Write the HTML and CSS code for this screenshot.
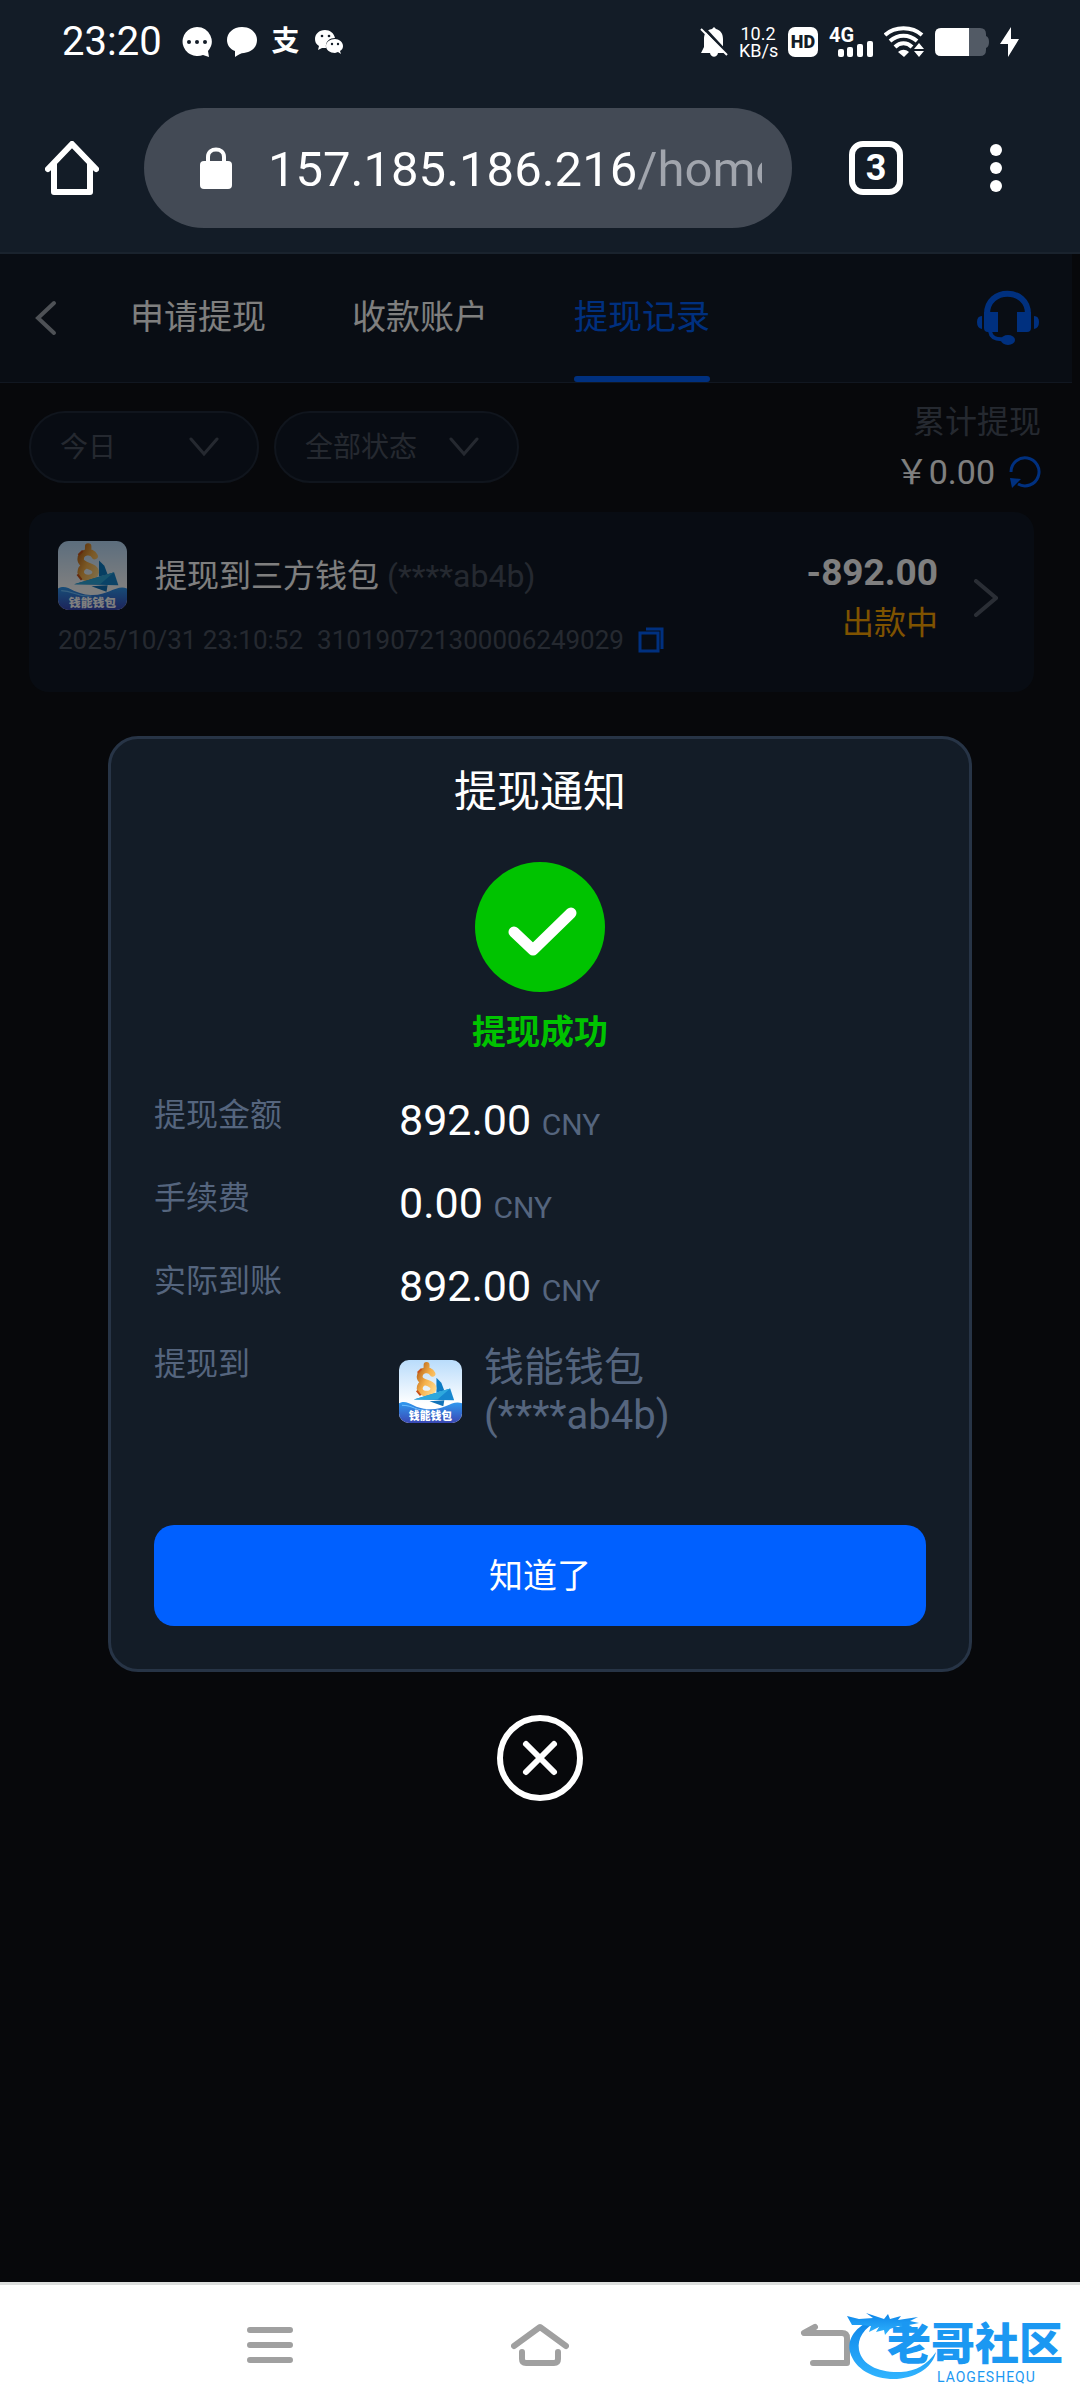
FILE: index.html
```html
<!DOCTYPE html>
<html lang="zh-CN">
<head>
    <meta charset="UTF-8">
    <meta name="viewport" content="width=device-width, initial-scale=1.0">
    <title>提现记录</title>
    <link rel="stylesheet" href="styles.css">
</head>
<body>
    <!-- 钱包图标 -->
    <svg class="defs" width="0" height="0" aria-hidden="true">
        <defs>
            <linearGradient id="sky" x1="0" y1="0" x2="0" y2="1">
                <stop offset="0" stop-color="#b9dcfb"/>
                <stop offset="0.7" stop-color="#ffffff"/>
            </linearGradient>
            <linearGradient id="gold" x1="0" y1="0" x2="1" y2="1">
                <stop offset="0" stop-color="#b8651a"/>
                <stop offset="0.5" stop-color="#f5b04a"/>
                <stop offset="1" stop-color="#ffd98c"/>
            </linearGradient>
            <linearGradient id="sea" x1="0" y1="0" x2="0" y2="1">
                <stop offset="0" stop-color="#2f9af0"/>
                <stop offset="1" stop-color="#3a48b5"/>
            </linearGradient>
            <linearGradient id="dragon" x1="0" y1="0" x2="0" y2="1">
                <stop offset="0" stop-color="#0d84e8"/>
                <stop offset="1" stop-color="#30b4ff"/>
            </linearGradient>
            <clipPath id="round"><rect width="64" height="64" rx="10"/></clipPath>
        </defs>
        <symbol id="wallet" viewBox="0 0 64 64">
            <g clip-path="url(#round)">
                <rect width="64" height="64" fill="url(#sky)"/>
                <path d="M38 18l5 5 3 8-8 2z" fill="#0d7cc4"/>
                <path d="M28 5v5M34 14c-3-6-13-4-13 3 0 7 14 5 14 12-1 7-13 7-14 0 0-3 2-5 4-6" fill="none" stroke="url(#gold)" stroke-width="6" stroke-linecap="round"/>
                <path d="M19 13l4-4M18 31l4 5" stroke="#c9541b" stroke-width="2"/>
                <path d="M15 40l37-11 4 12z" fill="#1787cf"/>
                <path d="M15 40l37-11-13 11z" fill="#2ea8dd"/>
                <path d="M31 42l15-1-1 6z" fill="#1273b9"/>
                <path d="M0 44c9-5 13 5 30 6s24-10 34-6v20H0z" fill="url(#sea)"/>
                <path d="M3 46c12 0 13 6 28 5" fill="none" stroke="#6dc0ff" stroke-width="1"/>
                <text x="32" y="61" text-anchor="middle" class="wallet-text">钱能钱包</text>
            </g>
        </symbol>
    </svg>

    <header class="system">
        <!-- 状态栏 -->
        <div class="status-bar">
            <span class="time">23:20</span>
            <div class="status-left">
                <svg width="30" height="30" viewBox="0 0 30 30"><path d="M15 0a15 14.500 0 1 0 6 28l6 2-1-6A15 14.500 0 0 0 15 0z" fill="#fff"/><g fill="#131c27"><circle cx="7" cy="15" r="2"/><circle cx="15" cy="15" r="2"/><circle cx="23" cy="15" r="2"/></g></svg>
                <svg width="30" height="30" viewBox="0 0 30 30"><path d="M15 0C6 0 0 6 0 13c0 5 3 9 8 11l0 6c3-2 6-4 9-4 8-1 13-6 13-13C30 6 24 0 15 0z" fill="#fff"/></svg>
                <span class="pay">支</span>
                <svg width="28" height="26" viewBox="0 0 28 26"><path d="M10 1C4 1 0 5 0 10c0 3 1 5 4 7l-1 4 4-2 4 0c-1-7 4-10 9-10C19 4 15 1 10 1z" fill="#fff"/><path d="M20 10c-5 0-9 3-9 7s4 7 9 7l3-1 3 2-1-3c2-1 3-3 3-5 0-4-4-7-8-7z" fill="#fff"/><g fill="#131c27"><circle cx="7" cy="7" r="1.300"/><circle cx="14" cy="7" r="1.300"/><circle cx="17" cy="15" r="1.200"/><circle cx="23" cy="15" r="1.200"/></g></svg>
            </div>
            <div class="status-right">
                <svg width="28" height="30" viewBox="0 0 28 30"><path d="M14 0l-2 2C6 3 4 7 4 12v8l-3 6h9c1 5 7 5 8 0h8l-3-6v-8c0-6-3-9-7-10z" fill="#fff"/><path d="M3 0l25 27" stroke="#131c27" stroke-width="3"/><path d="M1 2l26 26" stroke="#fff" stroke-width="2"/></svg>
                <span class="speed">10.2<br>KB/s</span>
                <span class="hd">HD</span>
                <svg class="signal" width="44" height="32" viewBox="0 0 44 32"><text x="0" y="16" class="net">4G</text><g fill="#fff"><rect x="9" y="23" width="6" height="8" rx="2"/><rect x="18" y="21" width="6" height="10" rx="2"/><rect x="28" y="18" width="6" height="13" rx="2"/><rect x="38" y="15" width="6" height="16" rx="2"/></g></svg>
                <svg width="40" height="32" viewBox="0 0 40 32"><g fill="none" stroke="#fff" stroke-width="4"><path d="M1 9c10-9 27-9 37 0"/><path d="M6 15c8-7 19-7 27 0"/><path d="M11 21c5-5 12-5 17 0"/></g><path d="M14 26c4-3 7-3 11 0l-5 5z" fill="#fff"/><path d="M35 17l5 6h-10zM35 31l5-6h-10z" fill="#fff"/></svg>
                <svg width="54" height="28" viewBox="0 0 54 28"><path d="M6 0h39q6 0 6 6v2q3 1 3 6t-3 6v2q0 6-6 6H6q-6 0-6-6V6q0-6 6-6z" fill="#525a65"/><path d="M6 0h28v28H6q-6 0-6-6V6q0-6 6-6z" fill="#fff"/></svg>
                <svg width="20" height="30" viewBox="0 0 20 30"><path d="M11 0L0 17h8v13L19 12h-8z" fill="#fff"/></svg>
            </div>
        </div>

        <!-- 浏览器工具栏 -->
        <div class="toolbar">
            <button class="icon-btn" aria-label="主页">
                <svg width="54" height="54" viewBox="0 0 54 54" fill="none" stroke="#fff" stroke-width="6" stroke-linecap="round" stroke-linejoin="round"><path d="M3 28L27 3l24 25M9 22v29h36V22"/></svg>
            </button>
            <button class="address">
                <svg width="32" height="42" viewBox="0 0 32 42"><rect y="14" width="32" height="28" rx="4" fill="#fff"/><path d="M8 16v-6c0-10 16-10 16 0v6" fill="none" stroke="#fff" stroke-width="4"/></svg>
                <span class="url">157.185.186.216<span class="path">/home</span></span>
            </button>
            <button class="tab-count">3</button>
            <button class="icon-btn more" aria-label="菜单">
                <svg width="36" height="48" viewBox="0 0 36 48" fill="#fff"><circle cx="18" cy="6" r="6"/><circle cx="18" cy="24" r="6"/><circle cx="18" cy="42" r="6"/></svg>
            </button>
        </div>
    </header>

    <main class="content">
        <div class="page">
            <div class="page-head">
                <button class="icon-btn" aria-label="返回">
                    <svg width="22" height="36" viewBox="0 0 22 36" fill="none" stroke="#9da3ac" stroke-width="4" stroke-linecap="round"><path d="M19 3L3 18l16 15"/></svg>
                </button>
                <nav class="tabs">
                    <a href="#apply">申请提现</a>
                    <a href="#account">收款账户</a>
                    <a href="#record" class="active">提现记录</a>
                </nav>
                <button class="icon-btn service" aria-label="客服">
                    <svg width="62" height="56" viewBox="0 0 62 56"><path d="M10 26v-2c0-27 41-27 41 0v2" fill="none" stroke="#0060ff" stroke-width="6"/><g fill="#0060ff"><path d="M7 22h14v20H11q-4 0-4-4zM40 22h14v16q0 4-4 4H40zM5 26v13q-5-1-5-7t5-6zM57 26v13q5-1 5-7t-5-6z"/><ellipse cx="31" cy="50" rx="7" ry="5"/></g><path d="M13 41c1 7 6 9 15 8" fill="none" stroke="#0060ff" stroke-width="4"/></svg>
                </button>
            </div>

            <div class="filters">
                <label class="filter">
                    <select class="day" aria-label="日期"><option>今日</option></select>
                    <svg width="30" height="20" viewBox="0 0 30 20"><path d="M2 2l13 15L28 2"/></svg>
                </label>
                <label class="filter">
                    <select class="state" aria-label="状态"><option>全部状态</option></select>
                    <svg width="30" height="20" viewBox="0 0 30 20"><path d="M2 2l13 15L28 2"/></svg>
                </label>
                <div class="total">
                    <span class="total-label">累计提现</span>
                    <span class="total-value">
                        <span>￥0.00</span>
                        <button class="icon-btn" aria-label="刷新">
                            <svg width="32" height="32" viewBox="0 0 32 32"><path d="M2 16a14 14 0 1 1 7 12" fill="none" stroke="#0060ff" stroke-width="3"/><path d="M1 22l11 1-9 9z" fill="#0060ff"/></svg>
                        </button>
                    </span>
                </div>
            </div>

            <article class="record">
                <div class="record-main">
                    <div class="record-title">
                        <svg class="record-logo" viewBox="0 0 64 64"><use href="#wallet"/></svg>
                        <span>提现到三方钱包 <span class="muted">(****ab4b)</span></span>
                    </div>
                    <div class="record-info">
                        <span>2025/10/31 23:10:52</span>
                        <span>310190721300006249029</span>
                        <button class="icon-btn" aria-label="复制">
                            <svg width="26" height="26" viewBox="0 0 26 26" fill="none" stroke="#0060ff" stroke-width="3"><path d="M2 6h18v18H2zM8 2h16v20"/></svg>
                        </button>
                    </div>
                </div>
                <div class="record-side">
                    <strong>-892.00</strong>
                    <span class="pending">出款中</span>
                </div>
                <svg width="24" height="38" viewBox="0 0 24 38" fill="none" stroke="#555d6b" stroke-width="4" stroke-linecap="round"><path d="M2 2l20 17L2 36"/></svg>
            </article>
        </div>

        <!-- 提现通知弹窗 -->
        <div class="overlay">
            <section class="modal" role="dialog" aria-labelledby="modal-title">
                <h1 id="modal-title">提现通知</h1>
                <svg class="success-icon" width="130" height="130" viewBox="0 0 130 130"><circle cx="65" cy="65" r="65" fill="#00c300"/><path d="M39 70l19 18 38-37" fill="none" stroke="#fff" stroke-width="11" stroke-linecap="round" stroke-linejoin="round"/></svg>
                <p class="success">提现成功</p>
                <dl class="detail">
                    <dt>提现金额</dt>
                    <dd>892.00 <small>CNY</small></dd>
                    <dt>手续费</dt>
                    <dd>0.00 <small>CNY</small></dd>
                    <dt>实际到账</dt>
                    <dd>892.00 <small>CNY</small></dd>
                    <dt>提现到</dt>
                    <dd class="wallet">
                        <svg class="wallet-logo" viewBox="0 0 64 64"><use href="#wallet"/></svg>
                        <span>钱能钱包<br>(****ab4b)</span>
                    </dd>
                </dl>
                <button class="confirm">知道了</button>
            </section>
            <button class="icon-btn" aria-label="关闭">
                <svg width="86" height="86" viewBox="0 0 86 86" fill="none" stroke="#fff" stroke-width="6" stroke-linecap="round"><circle cx="43" cy="43" r="40"/><path d="M29 29l28 28M57 29L29 57"/></svg>
            </button>
        </div>
    </main>

    <!-- 底部导航 -->
    <footer class="nav-bar">
        <button class="icon-btn" aria-label="最近任务">
            <svg width="46" height="44" viewBox="0 0 46 44"><path d="M3 7h40M3 22h40M3 37h40"/></svg>
        </button>
        <button class="icon-btn" aria-label="桌面">
            <svg width="58" height="44" viewBox="0 0 58 44"><path d="M3 23L29 4l26 19M11 29v7q0 4 4 4h28q4 0 4-4v-7"/></svg>
        </button>
        <button class="icon-btn" aria-label="返回上一页">
            <svg width="86" height="44" viewBox="0 0 86 44"><path d="M48 4L37 10h38q5 0 5 5v25H46"/></svg>
        </button>
        <div class="watermark">
            <svg width="94" height="72" viewBox="0 0 94 72" fill="url(#dragon)">
                <path d="M28 7C8 14 0 27 3 40c5 18 25 28 47 27 22-2 36-13 39-27-9 13-20 19-35 20-22 1-39-7-42-22-2-12 5-22 19-29z"/>
                <path d="M0 4l12 3 14-1-7-5 12 4 6 2 4-5 2 5 11-3-3 4 20-3-8 4 9 2-10 2 8 5-14-2-5-2-8 3-5 6-1-5-8 2 3-5-10 5 2-6-10-1-9 0z"/>
            </svg>
            <span class="brand">老哥社区<small>LAOGESHEQU</small></span>
        </div>
    </footer>
</body>
</html>
```
FILE: styles.css
```css
* {
    margin: 0;
    padding: 0;
    box-sizing: border-box;
}
body {
    font-family: Roboto, 'Noto Sans CJK SC', sans-serif;
    background: #0e1016;
    color: #fff;
    min-height: 100vh;
    display: flex;
    flex-direction: column;
}
svg {
    display: block;
    flex: none;
}
button {
    font-family: inherit;
    color: inherit;
    border: none;
    background: none;
    cursor: pointer;
}
a {
    color: inherit;
    text-decoration: none;
}
.defs {
    position: absolute;
}
.wallet-text {
    font-size: 11px;
    font-weight: 900;
    fill: #fff;
}
.icon-btn {
    display: flex;
    align-items: center;
    justify-content: center;
    flex: none;
}

/* 顶部 */
.system {
    background: #131c27;
    border-bottom: 2px solid #1a232e;
}
.status-bar {
    height: 84px;
    padding: 0 60px 0 62px;
    display: flex;
    align-items: center;
}
.time {
    font-size: 40px;
    line-height: 48px;
    margin-right: 20px;
}
.status-left {
    display: flex;
    align-items: center;
    gap: 15px;
}
.pay {
    width: 28px;
    font-size: 28px;
    line-height: 40px;
    font-weight: bold;
}
.status-right {
    margin-left: auto;
    display: flex;
    align-items: center;
    gap: 11px;
}
.speed {
    width: 38px;
    font-size: 18px;
    line-height: 17px;
    text-align: center;
}
.hd {
    width: 30px;
    height: 30px;
    border-radius: 7px;
    background: #fff;
    color: #131c27;
    font-size: 18px;
    line-height: 30px;
    font-weight: 900;
    text-align: center;
}
.signal {
    overflow: visible;
}
.net {
    font-size: 20px;
    font-weight: bold;
    fill: #fff;
}
.toolbar {
    height: 168px;
    padding: 0 66px 0 45px;
    display: flex;
    align-items: center;
}
.address {
    flex: 1;
    min-width: 0;
    height: 120px;
    margin: 0 57px 0 45px;
    padding: 0 30px 0 56px;
    border-radius: 60px;
    background: #434a55;
    display: flex;
    align-items: center;
    gap: 36px;
}
.url {
    flex: 1;
    padding-top: 4px;
    overflow: hidden;
    white-space: nowrap;
    text-align: left;
    font-size: 49px;
    line-height: 60px;
}
.path {
    color: #a1a5ad;
}
.tab-count {
    width: 54px;
    height: 54px;
    border: 6px solid #fff;
    border-radius: 14px;
    font-size: 36px;
    line-height: 42px;
    font-weight: bold;
}
.more {
    margin-left: 75px;
}

/* 提现记录 */
.content {
    flex: 1;
    position: relative;
}
.page {
    margin-right: 8px;
}
.page-head {
    height: 129px;
    padding: 0 33px 0 35px;
    background: #121b28;
    border-bottom: 1px solid #222f42;
    display: flex;
    align-items: center;
}
.tabs {
    align-self: stretch;
    margin-left: 73px;
    display: flex;
    gap: 86px;
}
.tabs a {
    padding-top: 39px;
    font-size: 34px;
    line-height: 48px;
}
.tabs a.active {
    color: #0060ff;
    position: relative;
}
.tabs a.active::after {
    content: "";
    position: absolute;
    left: 0;
    right: 0;
    bottom: 0;
    height: 6px;
    border-radius: 3px;
    background: #0060ff;
}
.service {
    margin-left: auto;
}
.filters {
    padding: 14px 31px 15px 29px;
    display: flex;
    align-items: center;
    gap: 15px;
}
.filter {
    display: grid;
    align-items: center;
}
.filter select,
.filter svg {
    grid-area: 1 / 1;
}
.filter select {
    height: 72px;
    padding: 0 29px;
    border: 2px solid #202a3a;
    border-radius: 36px;
    background: #111926;
    color: #4b5361;
    font-family: inherit;
    font-size: 28px;
    appearance: none;
}
.day {
    width: 230px;
}
.state {
    width: 245px;
}
.filter svg {
    justify-self: end;
    margin-right: 40px;
    fill: none;
    stroke: #4b5361;
    stroke-width: 3;
    stroke-linecap: round;
    pointer-events: none;
}
.total {
    margin-left: auto;
    display: flex;
    flex-direction: column;
    align-items: flex-end;
    font-size: 32px;
    line-height: 50px;
}
.total-label {
    color: #4b5361;
}
.total-value {
    display: flex;
    align-items: center;
    gap: 14px;
    font-size: 34px;
}
.record {
    margin: 0 38px 0 29px;
    padding: 29px 36px 37px 29px;
    border-radius: 20px;
    background: #111926;
    display: flex;
    align-items: center;
    gap: 36px;
}
.record-main {
    flex: 1;
    display: flex;
    flex-direction: column;
    gap: 15px;
}
.record-title {
    display: flex;
    align-items: center;
    gap: 28px;
    font-size: 32px;
    line-height: 48px;
}
.record-logo {
    width: 69px;
    height: 69px;
}
.muted {
    color: #4b5361;
}
.record-info {
    display: flex;
    align-items: center;
    gap: 14px;
    font-size: 26px;
    line-height: 30px;
    color: #4b5361;
}
.record-side {
    display: flex;
    flex-direction: column;
    align-items: flex-end;
    font-size: 32px;
    line-height: 50px;
}
.record-side strong {
    font-size: 37px;
}
.pending {
    color: #ffa600;
}

/* 弹窗 */
.overlay {
    position: absolute;
    inset: 0;
    background: rgba(0, 0, 0, 0.5);
    display: flex;
    flex-direction: column;
    align-items: center;
    justify-content: center;
    gap: 43px;
}
.modal {
    width: 80%;
    padding: 23px 43px 43px;
    border: 3px solid #273446;
    border-radius: 30px;
    background: #131c27;
    display: flex;
    flex-direction: column;
    align-items: center;
}
.modal h1 {
    font-size: 43px;
    line-height: 60px;
    font-weight: normal;
}
.success-icon {
    margin: 40px 0 20px;
}
.success {
    font-size: 34px;
    line-height: 40px;
    font-weight: bold;
    color: #00c300;
}
.detail {
    width: 100%;
    margin: 43px 0 85px;
    display: grid;
    grid-template-columns: 245px 1fr;
    row-gap: 33px;
    color: #55657e;
}
.detail dt {
    font-size: 32px;
    line-height: 40px;
}
.detail dd {
    font-size: 43px;
    line-height: 50px;
    color: #fff;
}
.detail small {
    font-size: 30px;
    line-height: 30px;
    color: #55657e;
}
.detail .wallet {
    display: flex;
    align-items: center;
    gap: 22px;
    font-size: 40px;
    line-height: 48px;
    color: #55657e;
}
.wallet-logo {
    width: 63px;
    height: 63px;
}
.confirm {
    width: 100%;
    height: 101px;
    padding-bottom: 4px;
    border-radius: 20px;
    background: #0060ff;
    font-size: 34px;
}

/* 底部 */
.nav-bar {
    position: relative;
    height: 126px;
    padding: 0 135px;
    border-top: 3px solid #dcdedd;
    background: #fff;
    display: grid;
    grid-template-columns: repeat(3, 1fr);
}
.nav-bar .icon-btn svg {
    margin-bottom: 3px;
    fill: none;
    stroke: #a0a0a0;
    stroke-width: 6;
    stroke-linecap: round;
    stroke-linejoin: round;
}
.watermark {
    position: absolute;
    right: 17px;
    bottom: 24px;
    display: flex;
}
.brand {
    margin: 8px 0 0 -54px;
    font-size: 44px;
    line-height: 50px;
    font-weight: 900;
    color: #1b98f2;
    display: flex;
    flex-direction: column;
}
.brand small {
    padding-left: 50px;
    font-size: 14px;
    line-height: 14px;
    font-weight: normal;
    letter-spacing: 1px;
}
```
